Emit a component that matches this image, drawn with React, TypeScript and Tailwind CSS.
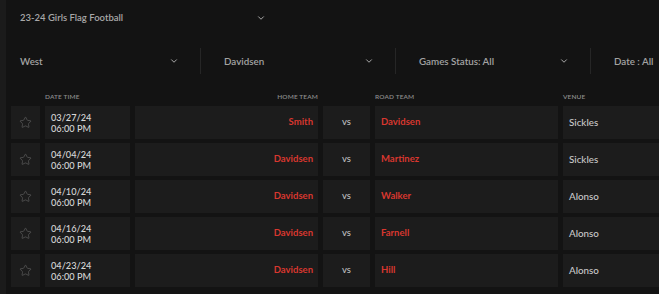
import { ChevronDown, Star } from "lucide-react";

type Game = {
  date: string;
  time: string;
  home: string;
  road: string;
  venue: string;
};

const games: Game[] = [
  { date: "03/27/24", time: "06:00 PM", home: "Smith", road: "Davidsen", venue: "Sickles" },
  { date: "04/04/24", time: "06:00 PM", home: "Davidsen", road: "Martinez", venue: "Sickles" },
  { date: "04/10/24", time: "06:00 PM", home: "Davidsen", road: "Walker", venue: "Alonso" },
  { date: "04/16/24", time: "06:00 PM", home: "Davidsen", road: "Farnell", venue: "Alonso" },
  { date: "04/23/24", time: "06:00 PM", home: "Davidsen", road: "Hill", venue: "Alonso" },
];

const font = { fontFamily: "Lato, 'Noto Sans', sans-serif" };

function Filter({
  label,
  first,
  last,
}: {
  label: string;
  first?: boolean;
  last?: boolean;
}) {
  return (
    <div
      className={`flex items-center h-full shrink-0 ${
        first ? "w-[189px] pl-[9px]" : "w-[195px] pl-[23px] border-l border-[#262626]"
      } ${last ? "" : "pr-[21px]"}`}
    >
      <span className="flex-1 text-[9.8px] font-semibold text-[#a3a3a3] whitespace-nowrap">
        {label}
      </span>
      {!last && <ChevronDown size={10} strokeWidth={2.4} className="text-[#a8a8a8]" />}
    </div>
  );
}

export default function App() {
  return (
    <div className="flex h-[294px] w-full overflow-hidden bg-[#131313]" style={font}>
      <div className="w-[6px] shrink-0 bg-[#1b1b1b]" />
      <div className="flex-1 min-w-0 pl-[5px] flex flex-col">
        <div className="h-[36px] w-[260px] flex items-center pl-[9px] pr-[5px]">
          <span className="flex-1 text-[9.5px] font-semibold text-[#a8a8a8]">
            23-24 Girls Flag Football
          </span>
          <ChevronDown size={10} strokeWidth={2.4} className="text-[#a8a8a8]" />
        </div>

        <div className="mt-[12px] h-[26px] flex items-center">
          <Filter label="West" first />
          <Filter label="Davidsen" />
          <Filter label="Games Status: All" />
          <Filter label="Date : All" last />
        </div>

        <div className="mt-[18px] grid grid-cols-[29px_85px_183px_47px_183px_1fr] gap-x-[5px] gap-y-[4px]">
          <div className="h-[10px] mb-[-1px]" />
          <div className="h-[10px] text-[6.5px] font-semibold tracking-[0.02em] text-[#8c8c8c] leading-[10px]">
            DATE TIME
          </div>
          <div className="h-[10px] text-[6.5px] font-semibold tracking-[0.02em] text-[#8c8c8c] leading-[10px] text-right">
            HOME TEAM
          </div>
          <div />
          <div className="h-[10px] text-[6.5px] font-semibold tracking-[0.02em] text-[#8c8c8c] leading-[10px]">
            ROAD TEAM
          </div>
          <div className="h-[10px] text-[6.5px] font-semibold tracking-[0.02em] text-[#8c8c8c] leading-[10px]">
            VENUE
          </div>

          {games.map((g, i) => (
            <div key={i} className="contents">
              <div className="h-[33px] bg-[#1c1c1c] flex items-center justify-center">
                <Star size={13} strokeWidth={1.3} className="text-[#5c5c5c]" />
              </div>
              <div className="h-[33px] bg-[#1c1c1c] flex flex-col justify-center pl-[6px] text-[9.2px] font-medium leading-[11px] text-[#d6d6d6]">
                <span>{g.date}</span>
                <span>{g.time}</span>
              </div>
              <div className="h-[33px] bg-[#1c1c1c] flex items-center justify-end pr-[5px] text-[9.5px] font-bold text-[#d8372f]">
                {g.home}
              </div>
              <div className="h-[33px] bg-[#1c1c1c] flex items-center justify-center text-[9.5px] font-medium text-[#bdbdbd]">
                vs
              </div>
              <div className="h-[33px] bg-[#1c1c1c] flex items-center pl-[6px] text-[9.5px] font-bold text-[#d8372f]">
                {g.road}
              </div>
              <div className="h-[33px] bg-[#1c1c1c] flex items-center pl-[6px] text-[9.8px] font-medium text-[#c9c9c9]">
                {g.venue}
              </div>
            </div>
          ))}
        </div>
      </div>
    </div>
  );
}
